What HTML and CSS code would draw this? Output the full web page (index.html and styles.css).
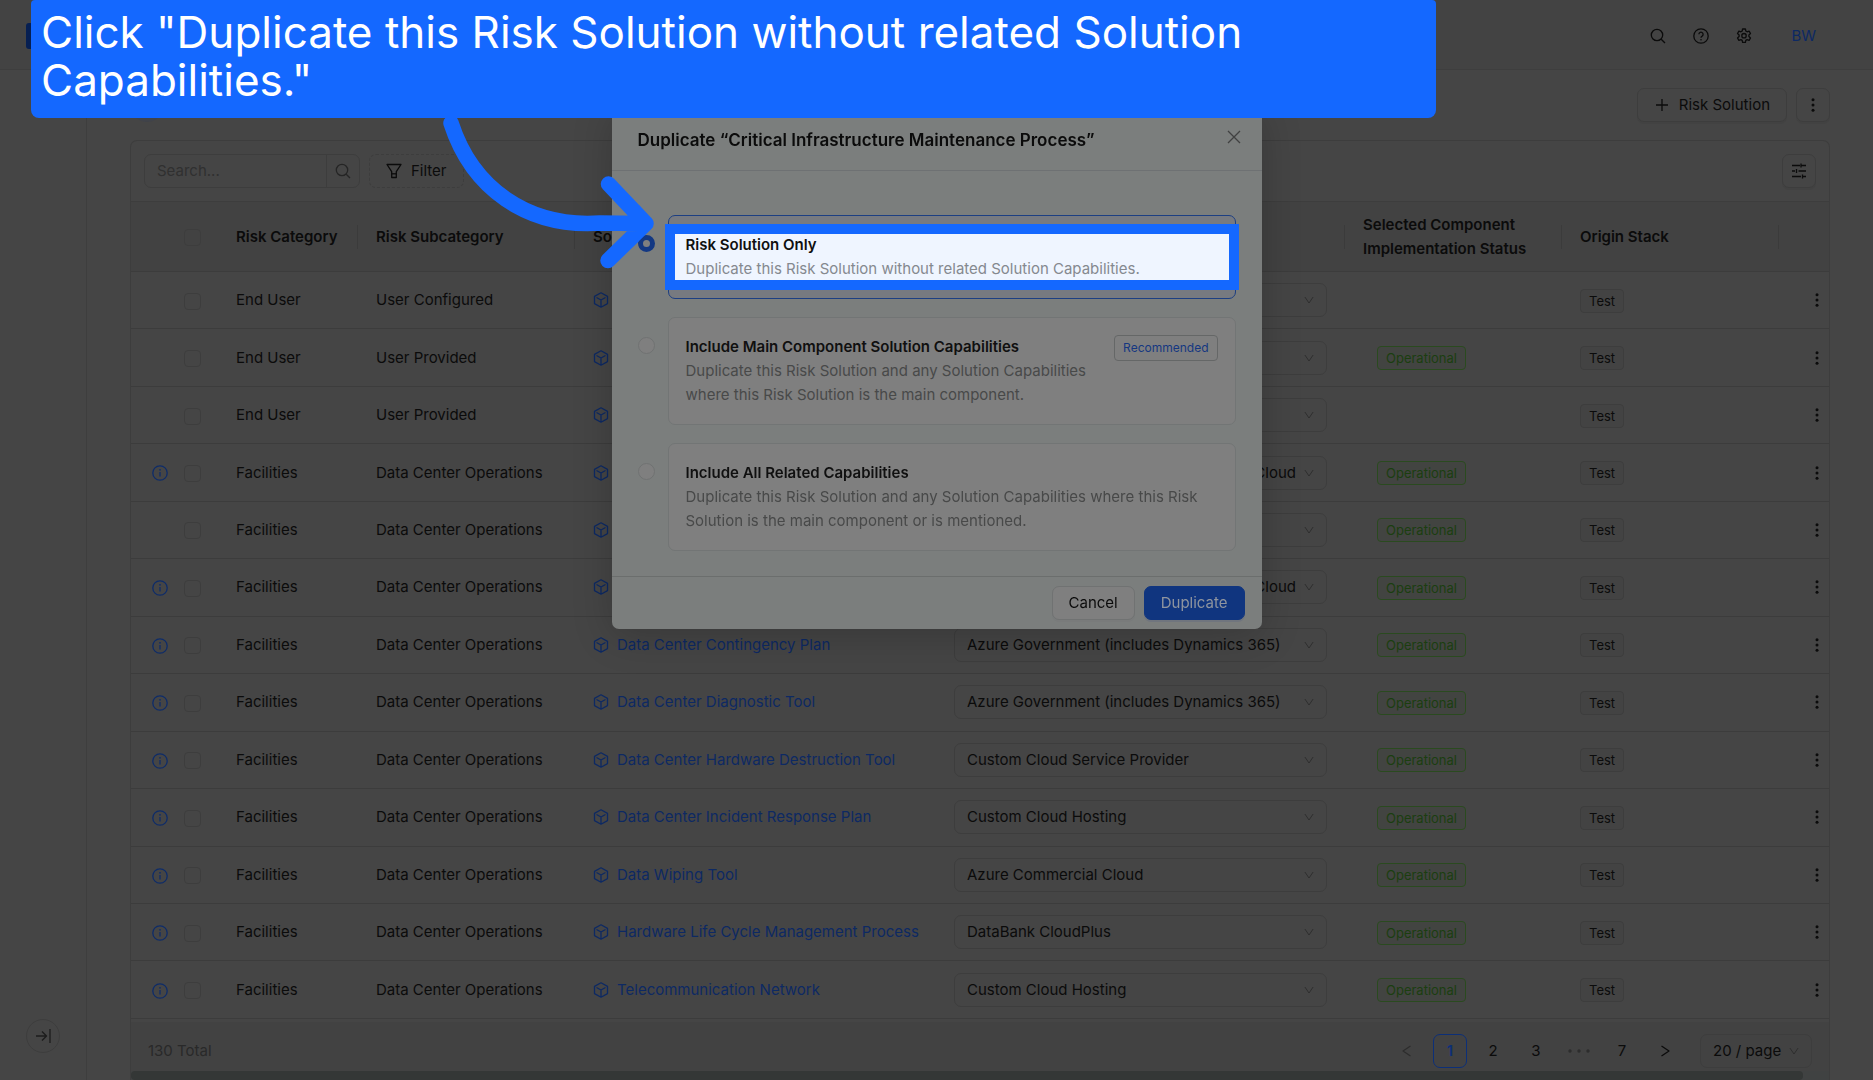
FILE: index.html
```html
<!DOCTYPE html>
<html lang="en">
<head>
    <meta charset="UTF-8">
    <meta name="viewport" content="width=device-width, initial-scale=1.0">
    <title>Risk Solutions</title>
    <link rel="stylesheet" href="styles.css">
</head>
<body>
    <!-- shared icons -->
    <svg class="sprite" aria-hidden="true">
        <symbol id="i-search" viewBox="0 0 16 16"><circle cx="7" cy="7" r="5.7"/><path d="M11.2 11.2L15 15"/></symbol>
        <symbol id="i-help" viewBox="0 0 16 16"><circle cx="8" cy="8" r="7.2"/><path d="M5.9 6.3a2.1 2.1 0 1 1 3.2 1.8c-.7.4-1.1.8-1.1 1.6"/><circle class="dot" cx="8" cy="11.7" r=".8"/></symbol>
        <symbol id="i-gear" viewBox="0 0 16 16"><path d="M6.6 1h2.8l.4 2 1.3.8 2-.7 1.4 2.4-1.6 1.4v1.6l1.6 1.4-1.4 2.4-2-.7-1.3.8-.4 2H6.6l-.4-2-1.3-.8-2 .7L1.5 9.900l1.600-1.400V6.900L1.500 5.500l1.400-2.400 2 .7L6.200 3z"/><circle cx="8" cy="7.700" r="2.200"/></symbol>
        <symbol id="i-plus" viewBox="0 0 16 16"><path d="M8 2v12M2 8h12"/></symbol>
        <symbol id="i-dots" viewBox="0 0 16 16"><circle class="dot" cx="8" cy="2.800" r="1.500"/><circle class="dot" cx="8" cy="8" r="1.500"/><circle class="dot" cx="8" cy="13.200" r="1.500"/></symbol>
        <symbol id="i-filter" viewBox="0 0 16 16"><path d="M1 1.500h14l-4.700 7.200v5.800H5.700V8.700z"/><path d="M5.700 10.800h4.600"/></symbol>
        <symbol id="i-sliders" viewBox="0 0 16 16"><path d="M1 2.500h8M10 .5v4M10 2.500h5M1 8h3M5.500 6v4M7.500 8H15M1 13.500h9M11.500 11.500v4M11.500 13.500H15"/></symbol>
        <symbol id="i-info" viewBox="0 0 16 16"><circle cx="8" cy="8" r="7.200"/><path d="M8 7v4.500"/><circle class="dot" cx="8" cy="4.800" r=".9"/></symbol>
        <symbol id="i-cube" viewBox="0 0 16 16"><path d="M8 .8l6.500 3.600v7.200L8 15.200l-6.500-3.600V4.400zM3.500 5.500L8 8l4.500-2.500M8 8v7"/></symbol>
        <symbol id="i-down" viewBox="0 0 16 16"><path d="M2.500 4L8 12l5.500-8"/></symbol>
        <symbol id="i-prev" viewBox="0 0 16 16"><path d="M11.500 3L4 8l7.500 5"/></symbol>
        <symbol id="i-next" viewBox="0 0 16 16"><path d="M4.500 3L12 8l-7.500 5"/></symbol>
        <symbol id="i-more" viewBox="0 0 24 16"><circle class="dot" cx="3" cy="8" r="1.700"/><circle class="dot" cx="12" cy="8" r="1.700"/><circle class="dot" cx="21" cy="8" r="1.700"/></symbol>
        <symbol id="i-close" viewBox="0 0 16 16"><path d="M2 2l12 12M14 2L2 14"/></symbol>
        <symbol id="i-expand" viewBox="0 0 16 16"><path d="M1 8h10M7 3.500L11.500 8 7 12.500M15 1v14"/></symbol>
    </svg>

    <div class="app">
        <header class="topbar">
            <span class="logo"></span>
            <nav class="topbar-actions">
                <button class="icon-btn" aria-label="Search"><svg class="icon"><use href="#i-search"/></svg></button>
                <button class="icon-btn" aria-label="Help"><svg class="icon"><use href="#i-help"/></svg></button>
                <button class="icon-btn" aria-label="Settings"><svg class="icon"><use href="#i-gear"/></svg></button>
                <a class="avatar" href="#">BW</a>
            </nav>
        </header>

        <div class="layout">
            <aside class="sidebar">
                <button class="expand" aria-label="Expand menu"><svg class="icon"><use href="#i-expand"/></svg></button>
            </aside>

            <main class="content">
                <div class="page-head">
                    <span class="page-icon"></span>
                    <div class="page-actions">
                        <button class="btn"><svg class="icon"><use href="#i-plus"/></svg>Risk Solution</button>
                        <button class="btn square" aria-label="More actions"><svg class="icon"><use href="#i-dots"/></svg></button>
                    </div>
                </div>

                <section class="card">
                    <div class="toolbar">
                        <form class="search">
                            <input type="search" placeholder="Search..." aria-label="Search">
                            <button type="button" aria-label="Run search"><svg class="icon"><use href="#i-search"/></svg></button>
                        </form>
                        <button class="btn dashed"><svg class="icon"><use href="#i-filter"/></svg>Filter</button>
                        <button class="btn square columns" aria-label="Columns"><svg class="icon"><use href="#i-sliders"/></svg></button>
                    </div>

                    <div class="table-wrap">
                        <table>
                            <colgroup>
                                <col class="c-check"><col class="c-category"><col class="c-sub"><col><col class="c-component"><col class="c-status"><col class="c-origin"><col class="c-menu">
                            </colgroup>
                            <thead>
                                <tr>
                                    <th class="check plain"><input type="checkbox" aria-label="Select all"></th>
                                    <th>Risk Category</th>
                                    <th>Risk Subcategory</th>
                                    <th>Solution</th>
                                    <th>Component</th>
                                    <th>Selected Component Implementation Status</th>
                                    <th>Origin Stack</th>
                                    <th class="plain"></th>
                                </tr>
                            </thead>
                            <tbody id="rows"></tbody>
                        </table>
                    </div>

                    <footer class="pager">
                        <span class="total">130 Total</span>
                        <button class="page off" aria-label="Previous"><svg class="icon"><use href="#i-prev"/></svg></button>
                        <button class="page active">1</button>
                        <button class="page">2</button>
                        <button class="page">3</button>
                        <span class="page off"><svg class="icon wide"><use href="#i-more"/></svg></span>
                        <button class="page">7</button>
                        <button class="page" aria-label="Next"><svg class="icon"><use href="#i-next"/></svg></button>
                        <div class="select page-size">
                            <select aria-label="Page size"><option>20 / page</option></select>
                            <svg class="icon"><use href="#i-down"/></svg>
                        </div>
                    </footer>
                    <div class="scrollbar"><div class="thumb"></div></div>
                </section>
            </main>
        </div>
    </div>

    <div class="modal-layer">
        <div class="modal" role="dialog" aria-labelledby="modal-title">
            <div class="modal-head">
                <h2 id="modal-title">Duplicate “Critical Infrastructure Maintenance Process”</h2>
                <button class="icon-btn close" aria-label="Close"><svg class="icon"><use href="#i-close"/></svg></button>
            </div>
            <div class="modal-body">
                <div class="choice">
                    <input type="radio" name="scope" id="scope-only" checked>
                    <label class="option selected" for="scope-only">
                        <span class="spotlight"></span>
                        <span class="option-text">
                            <strong>Risk Solution Only</strong>
                            <span>Duplicate this Risk Solution without related Solution Capabilities.</span>
                        </span>
                    </label>
                </div>
                <div class="choice">
                    <input type="radio" name="scope" id="scope-main">
                    <label class="option" for="scope-main">
                        <span class="option-text">
                            <strong>Include Main Component Solution Capabilities</strong>
                            <span>Duplicate this Risk Solution and any Solution Capabilities where this Risk Solution is the main component.</span>
                        </span>
                        <span class="tag recommended">Recommended</span>
                    </label>
                </div>
                <div class="choice">
                    <input type="radio" name="scope" id="scope-all">
                    <label class="option" for="scope-all">
                        <span class="option-text">
                            <strong>Include All Related Capabilities</strong>
                            <span>Duplicate this Risk Solution and any Solution Capabilities where this Risk Solution is the main component or is mentioned.</span>
                        </span>
                    </label>
                </div>
            </div>
            <div class="modal-foot">
                <button class="btn cancel">Cancel</button>
                <button class="btn primary">Duplicate</button>
            </div>
        </div>
    </div>

    <svg class="arrow" viewBox="0 0 224 160" aria-hidden="true">
        <path d="M11 13C32 78 87 118 160 113L206 113.500M168.500 74L206 113.500L168 150.500"/>
    </svg>
    <div class="callout">Click "Duplicate this Risk Solution without related Solution Capabilities."</div>

    <script>
        const dco = 'Data Center Operations';
        const azureGov = 'Azure Government (includes Dynamics 365)';
        const rows = [
            { category: 'End User', sub: 'User Configured' },
            { category: 'End User', sub: 'User Provided', live: true },
            { category: 'End User', sub: 'User Provided' },
            { category: 'Facilities', sub: dco, info: true, component: 'Cloud', end: true, live: true },
            { category: 'Facilities', sub: dco, live: true },
            { category: 'Facilities', sub: dco, info: true, component: 'Cloud', end: true, live: true },
            { category: 'Facilities', sub: dco, info: true, name: 'Data Center Contingency Plan', component: azureGov, live: true },
            { category: 'Facilities', sub: dco, info: true, name: 'Data Center Diagnostic Tool', component: azureGov, live: true },
            { category: 'Facilities', sub: dco, info: true, name: 'Data Center Hardware Destruction Tool', component: 'Custom Cloud Service Provider', live: true },
            { category: 'Facilities', sub: dco, info: true, name: 'Data Center Incident Response Plan', component: 'Custom Cloud Hosting', live: true },
            { category: 'Facilities', sub: dco, info: true, name: 'Data Wiping Tool', component: 'Azure Commercial Cloud', live: true },
            { category: 'Facilities', sub: dco, info: true, name: 'Hardware Life Cycle Management Process', component: 'DataBank CloudPlus', live: true },
            { category: 'Facilities', sub: dco, info: true, name: 'Telecommunication Network', component: 'Custom Cloud Hosting', live: true }
        ];

        const icon = name => `<svg class="icon"><use href="#i-${name}"/></svg>`;

        document.getElementById('rows').innerHTML = rows.map(row => `
            <tr>
                <td class="check">${row.info ? icon('info') : ''}<input type="checkbox" aria-label="Select row"></td>
                <td>${row.category}</td>
                <td>${row.sub}</td>
                <td><a class="solution" href="#" aria-label="${row.name || 'Solution'}">${icon('cube')}${row.name || ''}</a></td>
                <td><div class="select">
                    <select class="${row.end ? 'end' : ''}" aria-label="Component"><option>${row.component || ''}</option></select>
                    ${icon('down')}
                </div></td>
                <td>${row.live ? '<span class="tag live">Operational</span>' : ''}</td>
                <td><span class="tag">Test</span></td>
                <td class="menu"><button class="icon-btn" aria-label="Row actions">${icon('dots')}</button></td>
            </tr>`).join('');
    </script>
</body>
</html>
```
FILE: styles.css
```css
* {
    box-sizing: border-box;
}
body {
    margin: 0;
    background: #454545;
    color: #0b0b0b;
    font-family: Inter, sans-serif;
    font-size: 15px;
    line-height: 24px;
    overflow: hidden;
}
button, input, select {
    font: inherit;
    color: inherit;
    margin: 0;
}
a {
    color: #0d2963;
    text-decoration: none;
}
.sprite {
    display: none;
}
.icon {
    width: 16px;
    height: 16px;
    flex: none;
    fill: none;
    stroke: currentColor;
    stroke-width: 1.3;
    stroke-linejoin: round;
}
.wide {
    width: 24px;
}
.dot {
    fill: currentColor;
    stroke: none;
}

/* shell */
.app {
    display: flex;
    flex-direction: column;
    height: 100vh;
}
.topbar {
    display: flex;
    justify-content: space-between;
    align-items: center;
    height: 70px;
    padding: 3px 57px 0 26px;
    background: #434343;
    border-bottom: 1px solid #3e3e3e;
}
.logo {
    width: 26px;
    height: 26px;
    border-radius: 3px;
    background: #061f52;
}
.topbar-actions {
    display: flex;
    align-items: center;
    gap: 27px;
}
.icon-btn {
    display: flex;
    padding: 0;
    border: 0;
    background: none;
}
.avatar {
    margin-left: 12px;
}
.layout {
    display: flex;
    flex: 1;
    min-height: 0;
}
.sidebar {
    display: flex;
    flex-direction: column;
    justify-content: flex-end;
    align-items: center;
    width: 87px;
    padding-bottom: 27px;
    border-right: 1px solid #3e3e3e;
}
.expand {
    display: flex;
    justify-content: center;
    align-items: center;
    width: 34px;
    height: 34px;
    padding: 0;
    border: 1px solid #3d3d3d;
    border-radius: 50%;
    background: none;
    color: #1c1c1c;
}
.content {
    display: flex;
    flex-direction: column;
    flex: 1;
    gap: 18px;
    min-width: 0;
    padding: 18px 43px 0;
}
.page-head {
    display: flex;
    justify-content: space-between;
}
.page-icon {
    width: 34px;
    height: 34px;
    border-radius: 50%;
    background: #40434a;
}
.page-actions {
    display: flex;
    gap: 9px;
}

/* buttons */
.btn {
    display: flex;
    justify-content: center;
    align-items: center;
    gap: 9px;
    height: 34px;
    padding: 0 16px;
    border: 1px solid #3d3d3d;
    border-radius: 7px;
    background: none;
    box-shadow: 0 2px 0 #424242;
}
.square {
    width: 34px;
    padding: 0;
}
.dashed {
    border-style: dashed;
    box-shadow: none;
}
.columns {
    margin-left: auto;
}

/* table card */
.card {
    display: flex;
    flex-direction: column;
    flex: 1;
    min-height: 0;
    border: 1px solid #3d3d3d;
    border-bottom: 0;
    border-radius: 7px 7px 0 0;
}
.toolbar {
    display: flex;
    gap: 9px;
    padding: 13px;
    border-bottom: 1px solid #3d3d3d;
}
.search {
    display: flex;
    height: 34px;
    border: 1px solid #3d3d3d;
    border-radius: 7px;
}
.search input {
    width: 181px;
    padding: 0 12px;
    border: 0;
    outline: 0;
    background: none;
}
.search input::placeholder {
    color: #303030;
}
.search button {
    display: flex;
    align-items: center;
    padding: 0 8px;
    border: 0;
    border-left: 1px solid #3d3d3d;
    background: none;
    color: #252525;
}
.table-wrap {
    flex: 1;
    min-height: 0;
    padding-bottom: 3px;
}
table {
    width: 100%;
    height: 100%;
    table-layout: fixed;
    border-collapse: separate;
    border-spacing: 0;
}
.c-check { width: 87px; }
.c-category { width: 140px; }
.c-sub { width: 217px; }
.c-component { width: 409px; }
.c-status { width: 217px; }
.c-origin { width: 217px; }
.c-menu { width: 50px; }
thead tr {
    height: 70px;
}
th, td {
    padding: 0 18px;
    border-bottom: 1px solid #3c3c3c;
    text-align: left;
    white-space: nowrap;
}
th {
    background: linear-gradient(#3b3b3b, #3b3b3b) no-repeat right center / 1px 24px #424242;
    font-weight: 600;
    white-space: normal;
}
th.plain {
    background: #424242;
}
.check {
    padding: 0 17px 0 20px;
    text-align: right;
}
.check .icon {
    margin-right: 16px;
    color: #0e2c69;
    vertical-align: middle;
}
input[type="checkbox"] {
    appearance: none;
    width: 17px;
    height: 17px;
    border: 1px solid #3d3d3d;
    border-radius: 4px;
    vertical-align: middle;
}
.solution {
    display: flex;
    align-items: center;
    gap: 8px;
}
.menu {
    padding: 0 4px 0 0;
}
.menu .icon-btn {
    margin-left: auto;
}
.select {
    display: grid;
    align-items: center;
}
.select select {
    grid-area: 1 / 1;
    appearance: none;
    width: 100%;
    height: 34px;
    padding: 0 24px 0 12px;
    border: 1px solid #3d3d3d;
    border-radius: 7px;
    background: none;
}
.select .end {
    padding-right: 30px;
    text-align-last: right;
}
.select .icon {
    grid-area: 1 / 1;
    justify-self: end;
    width: 12px;
    height: 12px;
    margin-right: 12px;
    color: #2d2d2d;
    pointer-events: none;
}
.tag {
    display: inline-block;
    padding: 0 8px;
    border: 1px solid #3d3d3d;
    border-radius: 4px;
    background: #434343;
    font-size: 13px;
    line-height: 22px;
    vertical-align: middle;
}
.live {
    margin-left: 14px;
    border-color: #2a4a1f;
    background: #424441;
    color: #1b3e10;
}

/* pagination */
.pager {
    display: flex;
    align-items: center;
    gap: 9px;
    height: 49px;
    padding: 11px 17px 2px;
    background: #424242;
}
.total {
    margin-right: auto;
    color: #292929;
}
.page {
    display: flex;
    justify-content: center;
    align-items: center;
    width: 34px;
    height: 34px;
    padding: 0;
    border: 0;
    border-radius: 7px;
    background: none;
}
.active {
    border: 1px solid #0c2f78;
    color: #0c2f78;
    font-weight: 600;
}
.off {
    color: #2d2d2d;
}
.page-size {
    width: 112px;
    margin-left: 9px;
}
.scrollbar {
    height: 9px;
    padding-right: 26px;
    background: #404242;
}
.thumb {
    height: 9px;
    border-radius: 4px;
    background: #343736;
}

/* duplicate dialog */
.modal-layer {
    position: fixed;
    inset: 0;
    display: flex;
    justify-content: center;
    align-items: flex-start;
    padding-top: 108px;
}
.modal {
    width: 650px;
    border-radius: 7px;
    background: #7b7e7d;
    box-shadow: 0 6px 40px rgba(0, 0, 0, 0.2);
}
.modal-head {
    display: flex;
    justify-content: space-between;
    align-items: center;
    height: 63px;
    padding: 2px 20px 0 26px;
    border-bottom: 1px solid #6e7173;
}
.modal-head h2 {
    margin: 0;
    font-size: 17px;
    font-weight: 600;
}
.close {
    margin-bottom: 6px;
    color: #404141;
}
.modal-body {
    display: flex;
    flex-direction: column;
    gap: 18px;
    padding: 44px 26px 25px;
}
.choice {
    display: flex;
    align-items: flex-start;
    gap: 13px;
}
input[type="radio"] {
    appearance: none;
    flex: none;
    width: 17px;
    height: 17px;
    margin-top: 20px;
    border: 1px solid #707272;
    border-radius: 50%;
    background: #7f7f7f;
}
input[type="radio"]:checked {
    border: 5px solid #133883;
}
.option {
    position: relative;
    display: flex;
    flex: 1;
    justify-content: space-between;
    align-items: flex-start;
    padding: 17px;
    border: 1px solid #727575;
    border-radius: 7px;
    background: #7f7f7f;
}
.option-text {
    position: relative;
    display: flex;
    flex-direction: column;
    flex: 1;
    color: #484949;
}
.option-text strong {
    color: #101010;
    font-weight: 600;
}
.selected {
    border-color: #1d3f82;
    background: #777a80;
}
.selected .option-text {
    color: #85898f;
}
.spotlight {
    position: absolute;
    inset: 8px -4px 8px -4px;
    border: 10px solid #1468ff;
    background: #eff5ff;
}
.recommended {
    margin-left: 9px;
    border-color: #656767;
    background: none;
    color: #153781;
    font-size: 12px;
    line-height: 24px;
}
.modal-foot {
    display: flex;
    justify-content: flex-end;
    gap: 9px;
    padding: 9px 17px;
    border-top: 1px solid #6b6e6d;
}
.cancel {
    border-color: #707272;
    background: #7f7f7f;
    box-shadow: 0 2px 0 #797b7b;
}
.primary {
    border-color: #10357f;
    background: #10357f;
    color: #8f959f;
    box-shadow: 0 2px 0 #70757e;
}

/* guide callout */
.arrow {
    position: fixed;
    top: 110px;
    left: 440px;
    width: 224px;
    height: 160px;
    fill: none;
    stroke: #1468ff;
    stroke-width: 15.5;
    stroke-linecap: round;
    stroke-linejoin: round;
}
.callout {
    position: fixed;
    top: 0;
    left: 31px;
    width: 75vw;
    padding: 8px 10px 14px;
    border-radius: 4px 4px 8px 8px;
    background: #1468ff;
    color: #fff;
    font-size: 44px;
    line-height: 48px;
}
```
